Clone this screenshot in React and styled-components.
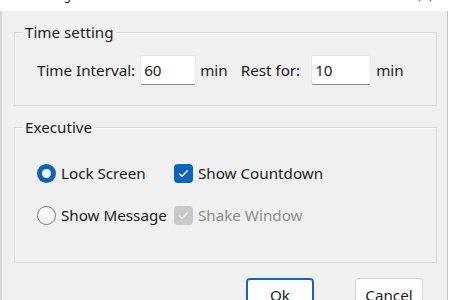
import React, { useState } from 'react';
import styled, { createGlobalStyle } from 'styled-components';

const GlobalStyle = createGlobalStyle`
  html, body {
    margin: 0;
    padding: 0;
    background: #ffffff;
    overflow: hidden;
  }
  body {
    font-family: "Noto Sans", "Open Sans", sans-serif;
    font-size: 15.2px;
    color: #1b1b1b;
  }
`;

const Window = styled.div`
  width: 448px;
  height: 300px;
  display: flex;
  flex-direction: column;
`;

const TitleBar = styled.div`
  height: 11px;
  flex: none;
  display: flex;
  align-items: flex-start;
  background: #ffffff;
  overflow: hidden;
  padding-left: 31px;
`;

const Title = styled.span`
  font-size: 12px;
  line-height: 14px;
  margin-top: -11px;
  color: #1b1b1b;
`;

const CloseIcon = styled.svg`
  margin-left: auto;
  margin-right: 16px;
  margin-top: -12px;
  flex: none;
`;

const Body = styled.div`
  flex: 1;
  background: #f0f0f0;
  border-left: 2px solid #d6d6d6;
  border-right: 1px solid #c4c4c4;
  padding: 11px 10px 0 12px;
  display: flex;
  flex-direction: column;
`;

const Group = styled.fieldset`
  margin: 0 0 ${({ $gap }) => $gap || 0}px 0;
  padding: 0 8px ${({ $bottom }) => $bottom}px 8px;
  border: 1px solid #d9d9d9;
  border-radius: 0;
  box-shadow: inset 1px 1px 0 #fafafa;
  min-width: 0;

  legend {
    padding: 0 2px;
    line-height: 21px;
    font-size: 15.2px;
    color: #1b1b1b;
  }
`;

const IntervalRow = styled.div`
  display: flex;
  align-items: center;
  padding-left: 14px;
  margin-top: 12px;
  height: 30px;
`;

const Label = styled.span`
  margin-right: ${({ $mr }) => $mr}px;
  white-space: nowrap;
  color: ${({ $disabled }) => ($disabled ? '#8d8d8d' : '#1b1b1b')};
`;

const NumberBox = styled.input`
  box-sizing: border-box;
  width: ${({ $w }) => $w}px;
  height: 30px;
  margin-right: ${({ $mr }) => $mr}px;
  padding: 0 3px;
  border: 1px solid #e6e6e6;
  border-bottom: 1px solid #8a8a8a;
  border-radius: 3px;
  background: #ffffff;
  font: inherit;
  color: #1b1b1b;
  outline: none;
`;

const OptionGrid = styled.div`
  display: grid;
  grid-template-columns: 137px auto;
  grid-auto-rows: 42px;
  align-items: center;
  padding-left: 14px;
  margin-top: 14px;
`;

const Option = styled.label`
  display: flex;
  align-items: center;
  gap: 5px;
  white-space: nowrap;
  color: ${({ $disabled }) => ($disabled ? '#8d8d8d' : '#1b1b1b')};
`;

const RadioDot = styled.span`
  box-sizing: border-box;
  width: 19px;
  height: 19px;
  border-radius: 50%;
  flex: none;
  display: flex;
  align-items: center;
  justify-content: center;
  background: ${({ $on }) => ($on ? '#0f62b9' : '#f7f7f7')};
  border: ${({ $on }) => ($on ? 'none' : '1px solid #7a7a7a')};

  &::after {
    content: '';
    display: ${({ $on }) => ($on ? 'block' : 'none')};
    width: 9px;
    height: 9px;
    border-radius: 50%;
    background: #ffffff;
  }
`;

const CheckBox = styled.span`
  box-sizing: border-box;
  width: 19px;
  height: 19px;
  border-radius: 4px;
  flex: none;
  display: flex;
  align-items: center;
  justify-content: center;
  background: ${({ $disabled }) => ($disabled ? '#c9c9c9' : '#0f62b9')};
`;

const Footer = styled.div`
  display: flex;
  justify-content: flex-end;
  gap: 41px;
  margin-top: 15px;
  padding-right: 14px;
`;

const Button = styled.button`
  box-sizing: border-box;
  width: 68px;
  height: 31px;
  border-radius: 4px;
  background: #fdfdfd;
  border: ${({ $primary }) => ($primary ? '2px solid #1466c0' : '1px solid #d3d3d3')};
  border-bottom-color: ${({ $primary }) => ($primary ? '#1466c0' : '#b8b8b8')};
  font: inherit;
  color: #1b1b1b;
  padding: 0;
  padding-top: 3px;
`;

const Check = ({ color }) => (
  <svg width="11" height="9" viewBox="0 0 11 9">
    <path d="M1.2 4.6 L4 7.3 L9.8 1.3" fill="none" stroke={color} strokeWidth="1.3" />
  </svg>
);

export default function App() {
  const [interval, setInterval] = useState('60');
  const [rest, setRest] = useState('10');

  return (
    <>
      <GlobalStyle />
      <Window>
        <TitleBar>
          <Title>Settings</Title>
          <CloseIcon width="14" height="14" viewBox="0 0 14 14">
            <path d="M1 1 L13 13 M13 1 L1 13" stroke="#6a6a6a" strokeWidth="1.1" />
          </CloseIcon>
        </TitleBar>
        <Body>
          <Group $bottom={20} $gap={11}>
            <legend>Time setting</legend>
            <IntervalRow>
              <Label $mr={5}>Time Interval:</Label>
              <NumberBox $w={56} $mr={4} value={interval} onChange={(e) => setInterval(e.target.value)} />
              <Label $mr={13}>min</Label>
              <Label $mr={11}>Rest for:</Label>
              <NumberBox $w={60} $mr={5} value={rest} onChange={(e) => setRest(e.target.value)} />
              <Label $mr={0}>min</Label>
            </IntervalRow>
          </Group>

          <Group $bottom={26}>
            <legend>Executive</legend>
            <OptionGrid>
              <Option>
                <RadioDot $on />
                Lock Screen
              </Option>
              <Option>
                <CheckBox>
                  <Check color="#ffffff" />
                </CheckBox>
                Show Countdown
              </Option>
              <Option>
                <RadioDot />
                Show Message
              </Option>
              <Option $disabled>
                <CheckBox $disabled>
                  <Check color="#f4f4f4" />
                </CheckBox>
                Shake Window
              </Option>
            </OptionGrid>
          </Group>

          <Footer>
            <Button $primary>Ok</Button>
            <Button>Cancel</Button>
          </Footer>
        </Body>
      </Window>
    </>
  );
}
